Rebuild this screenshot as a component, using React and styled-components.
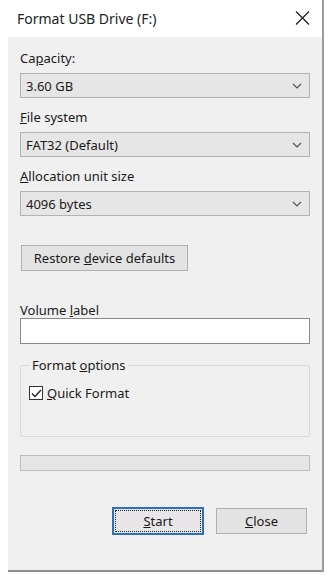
import React from 'react';
import styled, { createGlobalStyle } from 'styled-components';

const GlobalStyle = createGlobalStyle`
  html, body {
    margin: 0;
    padding: 0;
    background: #ffffff;
  }
  body {
    font-family: "Noto Sans", "Liberation Sans", sans-serif;
    font-size: 13px;
    color: #1a1a1a;
  }
`;

const Window = styled.div`
  width: 322px;
  border-right: 2px solid #9c9c9c;
  display: flex;
  flex-direction: column;
`;

const TitleBar = styled.div`
  height: 37px;
  display: flex;
  align-items: center;
  justify-content: space-between;
  padding: 0 12px 0 17px;
  background: #ffffff;
`;

const Title = styled.span`
  font-size: 14px;
  color: #222;
`;

const CloseIcon = styled.svg`
  width: 15px;
  height: 14px;
  margin-top: -1px;
`;

const Body = styled.div`
  margin-left: 8px;
  background: #f0f0f0;
  border-bottom: 2px solid #8e8e8e;
  padding: 13px 12px 35px;
  display: flex;
  flex-direction: column;
`;

const Field = styled.div`
  display: flex;
  flex-direction: column;
  margin-top: ${(p) => p.$gap || 0}px;
`;

const Label = styled.label`
  line-height: 16px;
  margin-bottom: ${(p) => p.$tight ? 0 : 7}px;
`;

const Select = styled.div`
  height: 25px;
  box-sizing: border-box;
  border: 1px solid #b3b3b3;
  background: #e6e6e6;
  display: flex;
  align-items: center;
  justify-content: space-between;
  padding: 0 7px 0 5px;
`;

const Chevron = styled.svg`
  width: 10px;
  height: 6px;
`;

const Button = styled.button`
  font: inherit;
  color: #1a1a1a;
  height: 26px;
  box-sizing: border-box;
  width: ${(p) => p.$width}px;
  border: 1px solid #b0b0b0;
  background: #e3e3e3;
  padding: 0;
  line-height: 16px;
  text-align: center;
`;

const RestoreButton = styled(Button)`
  margin: 29px 0 0 1px;
  align-self: flex-start;
`;

const DefaultButton = styled(Button)`
  height: 28px;
  border: 2px solid #2a6fc0;
  background: #e8e6e9;
  outline: 1px dotted #222;
  outline-offset: -4px;
`;

const TextInput = styled.div`
  height: 26px;
  box-sizing: border-box;
  border: 1px solid #8a8a8a;
  background: #ffffff;
`;

const Group = styled.fieldset`
  margin: 13px 0 0;
  padding: 12px 8px 0;
  height: 80px;
  box-sizing: border-box;
  border: 1px solid #dadada;
  border-radius: 2px;
  min-width: 0;
`;

const Legend = styled.legend`
  margin-left: 1px;
  padding: 0 2px;
  line-height: 16px;
`;

const CheckRow = styled.div`
  display: flex;
  align-items: center;
  gap: 4px;
  line-height: 16px;
`;

const CheckBox = styled.span`
  width: 14px;
  height: 14px;
  box-sizing: border-box;
  border: 1px solid #333;
  background: #fff;
  display: flex;
  align-items: center;
  justify-content: center;
`;

const Progress = styled.div`
  margin-top: 18px;
  height: 16px;
  box-sizing: border-box;
  border: 1px solid #bdbdbd;
  background: #e6e6e6;
`;

const ButtonRow = styled.div`
  margin-top: 36px;
  display: flex;
  justify-content: flex-end;
  align-items: center;
  gap: 12px;
  padding-right: 3px;
`;

function Dropdown({ value }) {
  return (
    <Select>
      <span>{value}</span>
      <Chevron viewBox="0 0 10 6">
        <polyline points="1,1 5,5 9,1" fill="none" stroke="#555" strokeWidth="1.2" />
      </Chevron>
    </Select>
  );
}

export default function App() {
  return (
    <>
      <GlobalStyle />
      <Window>
        <TitleBar>
          <Title>Format USB Drive (F:)</Title>
          <CloseIcon viewBox="0 0 15 14">
            <path d="M1 0.5 L14 13.5 M14 0.5 L1 13.5" stroke="#222" strokeWidth="1.3" />
          </CloseIcon>
        </TitleBar>
        <Body>
          <Field>
            <Label>Ca<u>p</u>acity:</Label>
            <Dropdown value="3.60 GB" />
          </Field>
          <Field $gap={11}>
            <Label><u>F</u>ile system</Label>
            <Dropdown value="FAT32 (Default)" />
          </Field>
          <Field $gap={11}>
            <Label><u>A</u>llocation unit size</Label>
            <Dropdown value="4096 bytes" />
          </Field>
          <RestoreButton $width={167}>Restore <u>d</u>evice defaults</RestoreButton>
          <Field $gap={31}>
            <Label $tight>Volume <u>l</u>abel</Label>
            <TextInput />
          </Field>
          <Group>
            <Legend>Format <u>o</u>ptions</Legend>
            <CheckRow>
              <CheckBox>
                <svg width="11" height="9" viewBox="0 0 11 9">
                  <polyline points="1,4.5 4,7.5 10,1" fill="none" stroke="#222" strokeWidth="1.3" />
                </svg>
              </CheckBox>
              <span><u>Q</u>uick Format</span>
            </CheckRow>
          </Group>
          <Progress />
          <ButtonRow>
            <DefaultButton $width={92}><u>S</u>tart</DefaultButton>
            <Button $width={91}><u>C</u>lose</Button>
          </ButtonRow>
        </Body>
      </Window>
    </>
  );
}
